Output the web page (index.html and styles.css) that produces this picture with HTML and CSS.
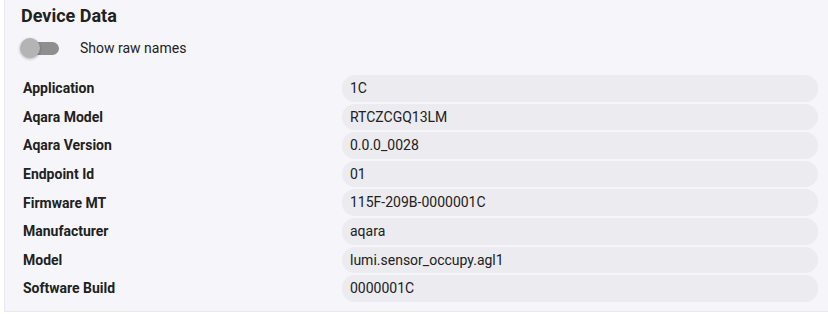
FILE: index.html
```html
<!DOCTYPE html>
<html lang="en">
<head>
    <meta charset="UTF-8">
    <meta name="viewport" content="width=device-width, initial-scale=1.0">
    <title>Device Data</title>
    <link rel="stylesheet" href="styles.css">
</head>
<body>
    <div class="panel">
        <h2 class="panel-title">Device Data</h2>
        <label class="switch-row">
            <span class="switch">
                <span class="switch-track"></span>
                <span class="switch-thumb"></span>
            </span>
            <span class="switch-label">Show raw names</span>
        </label>
        <div class="data-list">
            <div class="data-row"><span class="data-key">Application</span><span class="data-value">1C</span></div>
            <div class="data-row"><span class="data-key">Aqara Model</span><span class="data-value">RTCZCGQ13LM</span></div>
            <div class="data-row"><span class="data-key">Aqara Version</span><span class="data-value">0.0.0_0028</span></div>
            <div class="data-row"><span class="data-key">Endpoint Id</span><span class="data-value">01</span></div>
            <div class="data-row"><span class="data-key">Firmware MT</span><span class="data-value">115F-209B-0000001C</span></div>
            <div class="data-row"><span class="data-key">Manufacturer</span><span class="data-value">aqara</span></div>
            <div class="data-row"><span class="data-key">Model</span><span class="data-value">lumi.sensor_occupy.agl1</span></div>
            <div class="data-row"><span class="data-key">Software Build</span><span class="data-value">0000001C</span></div>
        </div>
    </div>
</body>
</html>
```

FILE: styles.css
```css
body {
    font-family: Roboto, "Noto Sans", Arial, sans-serif;
    margin: 0;
    padding: 0;
    background-color: #fff;
    color: #212121;
}

.panel {
    margin-left: 4px;
    height: 312px;
    box-sizing: border-box;
    padding: 4px 10px 0 16px;
    background-color: #f6f6fa;
    border-left: 1px solid #e8e8ee;
    border-bottom: 1px solid #e8e8ee;
}

.panel-title {
    margin: 0;
    font-size: 18px;
    font-weight: 700;
    line-height: 24px;
}

.switch-row {
    display: flex;
    align-items: center;
    height: 24px;
    margin-top: 8px;
    cursor: pointer;
}

.switch {
    position: relative;
    width: 40px;
    height: 24px;
    margin-right: 19px;
}

.switch-track {
    position: absolute;
    left: 3px;
    top: 6px;
    width: 35px;
    height: 13px;
    border-radius: 7px;
    background-color: #8f8f8f;
}

.switch-thumb {
    position: absolute;
    left: -1px;
    top: 2px;
    width: 20px;
    height: 20px;
    border-radius: 50%;
    background-color: #b4b4b4;
    box-shadow: 0 1px 3px rgba(0, 0, 0, 0.3);
}

.switch-label {
    font-size: 14px;
}

.data-list {
    margin-top: 15px;
    display: flex;
    flex-direction: column;
    gap: 2px;
}

.data-row {
    display: grid;
    grid-template-columns: 321px 1fr;
    align-items: center;
    font-size: 14px;
}

.data-key {
    font-weight: 700;
    padding-left: 2px;
}

.data-value {
    height: 26.6px;
    line-height: 26.6px;
    padding: 0 8px;
    border-radius: 13px;
    background-color: #ebebf0;
}
```
